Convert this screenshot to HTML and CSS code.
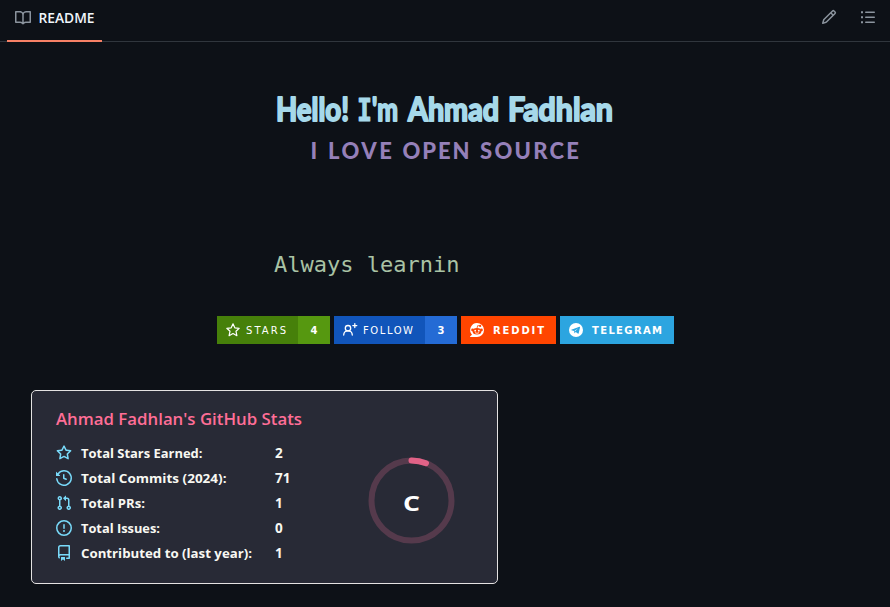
FILE: index.html
```html
<!DOCTYPE html>
<html lang="en">
<head>
<meta charset="utf-8">
<title>README</title>
<link rel="stylesheet" href="styles.css">
</head>
<body>
<header class="bar">
  <div class="tab">
    <svg class="icon" viewBox="0 0 16 16"><path d="M0 1.75A.75.75 0 0 1 .75 1h4.253c1.227 0 2.317.59 3 1.501A3.743 3.743 0 0 1 11.006 1h4.245a.75.75 0 0 1 .75.75v10.5a.75.75 0 0 1-.75.75h-4.507a2.25 2.25 0 0 0-1.591.659l-.622.621a.75.75 0 0 1-1.06 0l-.622-.621A2.25 2.25 0 0 0 5.258 13H.75a.75.75 0 0 1-.75-.75Zm7.251 10.324.004-5.073-.002-2.253A2.25 2.25 0 0 0 5.003 2.5H1.5v9h3.757a3.75 3.75 0 0 1 1.994.574ZM8.755 4.75l-.004 7.322a3.752 3.752 0 0 1 1.992-.572H14.5v-9h-3.495a2.25 2.25 0 0 0-2.25 2.25Z"/></svg>
    <svg class="tab-label" viewBox="0 0 57 20"><text x="0.5" y="15" textLength="56" lengthAdjust="spacingAndGlyphs">README</text></svg>
  </div>
  <div class="actions">
    <svg class="icon" viewBox="0 0 16 16"><path d="M11.013 1.427a1.75 1.75 0 0 1 2.474 0l1.086 1.086a1.75 1.75 0 0 1 0 2.474l-8.61 8.61c-.21.21-.47.364-.756.445l-3.251.93a.75.75 0 0 1-.927-.928l.929-3.25c.081-.286.235-.547.445-.758l8.61-8.61Zm.176 4.823L9.75 4.81l-6.286 6.287a.253.253 0 0 0-.064.108l-.558 1.953 1.953-.558a.253.253 0 0 0 .108-.064Zm1.238-3.763a.25.25 0 0 0-.354 0L10.811 3.75l1.439 1.44 1.263-1.263a.25.25 0 0 0 0-.354Z"/></svg>
    <svg class="icon" viewBox="0 0 16 16"><path d="M5.75 2.5h8.5a.75.75 0 0 1 0 1.5h-8.5a.75.75 0 0 1 0-1.5Zm0 5h8.5a.75.75 0 0 1 0 1.5h-8.5a.75.75 0 0 1 0-1.5Zm0 5h8.5a.75.75 0 0 1 0 1.5h-8.5a.75.75 0 0 1 0-1.5ZM1 2.25h2v2H1Zm0 5h2v2H1Zm0 5h2v2H1Z"/></svg>
  </div>
</header>
<main>
  <svg class="banner" viewBox="0 0 350 90">
    <text class="hello" y="41"><tspan x="7" textLength="73" lengthAdjust="spacingAndGlyphs">Hello!</tspan> <tspan class="slab" x="88" textLength="15" lengthAdjust="spacingAndGlyphs">I</tspan><tspan x="103" textLength="26" lengthAdjust="spacingAndGlyphs">'m</tspan> <tspan x="139" textLength="91" lengthAdjust="spacingAndGlyphs">Ahmad</tspan> <tspan x="239" textLength="105" lengthAdjust="spacingAndGlyphs">Fadhlan</tspan></text>
    <text class="love" y="79"><tspan x="41.5">I</tspan> <tspan x="59" textLength="64">LOVE</tspan> <tspan x="133.5" textLength="67">OPEN</tspan> <tspan x="211" textLength="99">SOURCE</tspan></text>
  </svg>
  <p class="typing">Always learnin</p>
  <div class="badges">
    <div class="badge stars">
      <div class="left">
        <svg viewBox="0 0 16 16"><path d="M8 1.8l1.8 4 4.4.5-3.2 3 .9 4.4L8 11.5l-3.9 2.2.9-4.4-3.2-3 4.4-.5Z" fill="none" stroke="#fff" stroke-width="1.2" stroke-linejoin="round"/></svg>
        <svg class="word" viewBox="0 0 41 28"><text x="0" y="18" textLength="40">STARS</text></svg>
      </div>
      <b>4</b>
    </div>
    <div class="badge follow">
      <div class="left">
        <svg viewBox="0 0 16 16" fill="none" stroke="#fff" stroke-width="1.3" stroke-linecap="round"><circle cx="6" cy="6.2" r="2.7"/><path d="M1.7 13c.2-5.4 8.4-5.4 8.6 0M12.8 1.6v4M10.8 3.6h4"/></svg>
        <svg class="word" viewBox="0 0 51 28"><text x="0" y="18" textLength="50">FOLLOW</text></svg>
      </div>
      <b>3</b>
    </div>
    <div class="badge reddit">
      <svg viewBox="0 0 16 16"><path fill="#fff" d="M8 1a7 7 0 1 1 0 14H1.6c-.5 0-.7-.5-.4-.8L3 12.7A7 7 0 0 1 8 1Z"/><g fill="#ff4500"><ellipse cx="8" cy="9.3" rx="4.4" ry="3.2"/><circle cx="3.5" cy="7.9" r="1.3"/><circle cx="12.5" cy="7.9" r="1.3"/><circle cx="11.2" cy="3.9" r="1.1"/></g><path d="M8 6.3l.7-2.7 2.3.3" fill="none" stroke="#ff4500" stroke-width=".8"/><g fill="#fff"><circle cx="6.2" cy="8.7" r=".9"/><circle cx="9.8" cy="8.7" r=".9"/></g><path d="M6 10.7q2 1.3 4 0" stroke="#fff" fill="none" stroke-width=".8"/></svg>
      <svg class="word" viewBox="0 0 52 28"><text x="0" y="18" textLength="51">REDDIT</text></svg>
    </div>
    <div class="badge telegram">
      <svg viewBox="0 0 16 16"><circle cx="8" cy="8" r="7" fill="#fff"/><path fill="#2ca5e0" d="M3.3 7.8 11.4 4.7q.8-.2.6.8l-1.3 5.8q-.2.8-.9.3L7.7 10.1l-1 1q-.3.2-.3-.2l-.3-2-2.6-.7q-.5-.2-.2-.4Z"/><path d="M6.3 8.9l3.9-2.6-3 3" fill="#fff"/></svg>
      <svg class="word" viewBox="0 0 71 28"><text x="0" y="18" textLength="70">TELEGRAM</text></svg>
    </div>
  </div>
  <section class="card">
    <svg class="card-title" viewBox="0 0 250 28"><text x="0" y="19" textLength="246" lengthAdjust="spacingAndGlyphs">Ahmad Fadhlan's GitHub Stats</text></svg>
    <div class="card-body">
      <div class="stats">
        <div class="row">
          <svg class="icon" viewBox="0 0 16 16"><path fill-rule="evenodd" d="M8 .25a.75.75 0 01.673.418l1.882 3.815 4.21.612a.75.75 0 01.416 1.279l-3.046 2.97.719 4.192a.75.75 0 01-1.088.791L8 12.347l-3.766 1.98a.75.75 0 01-1.088-.79l.72-4.194L.818 6.374a.75.75 0 01.416-1.28l4.21-.611L7.327.668A.75.75 0 018 .25zm0 2.445L6.615 5.5a.75.75 0 01-.564.41l-3.097.45 2.24 2.184a.75.75 0 01.216.664l-.528 3.084 2.769-1.456a.75.75 0 01.698 0l2.77 1.456-.53-3.084a.75.75 0 01.216-.664l2.24-2.183-3.096-.45a.75.75 0 01-.564-.41L8 2.694z"/></svg>
          <svg class="name" viewBox="0 0 194 25"><text x="0" y="17.5" textLength="121.5" lengthAdjust="spacingAndGlyphs">Total Stars Earned:</text></svg><span>2</span>
        </div>
        <div class="row">
          <svg class="icon" viewBox="0 0 16 16"><path fill-rule="evenodd" d="M1.643 3.143L.427 1.927A.25.25 0 000 2.104V5.75c0 .138.112.25.25.25h3.646a.25.25 0 00.177-.427L2.715 4.215a6.5 6.5 0 11-1.18 4.458.75.75 0 10-1.493.154 8.001 8.001 0 101.6-5.684zM7.75 4a.75.75 0 01.75.75v2.992l2.028.812a.75.75 0 01-.557 1.392l-2.5-1A.75.75 0 017 8.25v-3.5A.75.75 0 017.75 4z"/></svg>
          <svg class="name" viewBox="0 0 194 25"><text x="0" y="17.5" textLength="145.5" lengthAdjust="spacingAndGlyphs">Total Commits (2024):</text></svg><span>71</span>
        </div>
        <div class="row">
          <svg class="icon" viewBox="0 0 16 16"><path fill-rule="evenodd" d="M7.177 3.073L9.573.677A.25.25 0 0110 .854v4.792a.25.25 0 01-.427.177L7.177 3.427a.25.25 0 010-.354zM3.75 2.5a.75.75 0 100 1.5.75.75 0 000-1.5zm-2.25.75a2.25 2.25 0 113 2.122v5.256a2.251 2.251 0 11-1.5 0V5.372A2.25 2.25 0 011.5 3.25zM11 2.5h-1V4h1a1 1 0 011 1v5.628a2.251 2.251 0 101.5 0V5A2.5 2.5 0 0011 2.5zm1 10.25a.75.75 0 111.5 0 .75.75 0 01-1.5 0zM3.75 12a.75.75 0 100 1.5.75.75 0 000-1.5z"/></svg>
          <svg class="name" viewBox="0 0 194 25"><text x="0" y="17.5" textLength="64" lengthAdjust="spacingAndGlyphs">Total PRs:</text></svg><span>1</span>
        </div>
        <div class="row">
          <svg class="icon" viewBox="0 0 16 16"><path fill-rule="evenodd" d="M8 1.5a6.5 6.5 0 100 13 6.5 6.5 0 000-13zM0 8a8 8 0 1116 0A8 8 0 010 8zm9 3a1 1 0 11-2 0 1 1 0 012 0zm-.25-6.25a.75.75 0 00-1.5 0v3.5a.75.75 0 001.5 0v-3.5z"/></svg>
          <svg class="name" viewBox="0 0 194 25"><text x="0" y="17.5" textLength="79" lengthAdjust="spacingAndGlyphs">Total Issues:</text></svg><span>0</span>
        </div>
        <div class="row">
          <svg class="icon" viewBox="0 0 16 16"><path fill-rule="evenodd" d="M2 2.5A2.5 2.5 0 014.5 0h8.75a.75.75 0 01.75.75v12.5a.75.75 0 01-.75.75h-2.5a.75.75 0 110-1.5h1.75v-2h-8a1 1 0 00-.714 1.7.75.75 0 01-1.072 1.05A2.495 2.495 0 012 11.5v-9zm10.5-1V9h-8c-.356 0-.694.074-1 .208V2.5a1 1 0 011-1h8zM5 12.25v3.25a.25.25 0 00.4.2l1.45-1.087a.25.25 0 01.3 0L8.6 15.7a.25.25 0 00.4-.2v-3.25a.25.25 0 00-.25-.25h-3.5a.25.25 0 00-.25.25z"/></svg>
          <svg class="name" viewBox="0 0 194 25"><text x="0" y="17.5" textLength="171" lengthAdjust="spacingAndGlyphs">Contributed to (last year):</text></svg><span>1</span>
        </div>
      </div>
      <svg class="ring" viewBox="0 0 88 88"><circle class="rim" cx="44.5" cy="43.5" r="40"/><path class="arc" d="M44.5 3.5A40 40 0 0 1 59 6.2"/><text x="36" y="54" textLength="17" lengthAdjust="spacingAndGlyphs">C</text></svg>
    </div>
  </section>
</main>
</body>
</html>
```
FILE: styles.css
```css
* { box-sizing: border-box; }
body { margin: 0; background: #0d1117; color: #f0f6fc; font-family: "Open Sans", "Noto Sans", sans-serif; overflow: hidden; }
svg { display: block; flex: none; overflow: visible; }
.icon { width: 16px; height: 16px; fill: #8b949e; }
.bar { height: 42px; display: flex; justify-content: space-between; padding: 0 14px 0 7px; border-bottom: 1px solid #30363d; }
.tab { display: flex; gap: 7px; width: 95px; height: 42px; padding: 10px 0 0 8px; border-bottom: 2px solid #f78166; }
.tab-label { width: 57px; height: 20px; margin-top: -2px; fill: #f0f6fc; font-size: 13.5px; font-weight: 600; }
.actions { display: flex; gap: 23px; padding-top: 9px; }
.banner { width: 350px; height: 90px; margin: 38px 0 0 269px; }
.hello { font: 700 33px Lato, sans-serif; fill: #a6d9ea; stroke: #a6d9ea; stroke-width: 2px; stroke-linejoin: round; }
.slab { font-family: "DejaVu Sans Mono", monospace; font-size: 32px; font-weight: 700; stroke-width: 1px; }
.love { font: 900 22px Lato, sans-serif; fill: #9580b9; }
.typing { margin: 81px 0 0 274px; font: 22px/28px "DejaVu Sans Mono", monospace; color: #a9c3a5; }
.badges { display: flex; gap: 4px; margin: 37px 0 0 217px; }
.badge { display: flex; height: 28px; font: 10px "DejaVu Sans", sans-serif; color: #fff; fill: #fff; align-items: center; }
.badge svg { width: 16px; height: 16px; }
.badge .word { height: 28px; }
.badge b { width: 32px; text-align: center; font-size: 10px; line-height: 29px; }
.left { display: flex; align-items: center; height: 28px; padding-left: 8px; gap: 5px; }
.stars { background: #569810; }
.stars .left { width: 81px; background: #46800a; }
.stars .word { width: 41px; }
.follow { background: #246bd5; }
.follow .left { width: 91px; background: #1155ba; }
.follow .word { width: 51px; }
.reddit { width: 95px; background: #ff4500; padding-left: 8px; gap: 8px; font-weight: 700; }
.reddit .word { width: 52px; }
.telegram { width: 114px; background: #2ca5e0; padding-left: 8px; gap: 8px; font-weight: 700; }
.telegram .word { width: 71px; }
.card { width: 467px; height: 194px; margin: 46px 0 0 31px; padding: 15px 0 0 24px; border: 1px solid #e4e2e2; border-radius: 5px; background: #282a36; }
.card-title { width: 250px; height: 28px; fill: #ff6e96; font-size: 17px; font-weight: 600; }
.card-body { display: flex; }
.stats { width: 311px; padding-top: 6px; }
.row { display: flex; height: 25px; align-items: center; color: #f8f8f2; font-size: 13px; font-weight: 700; line-height: 25px; }
.row span { font-size: 13.5px; padding-top: 1px; }
.row .icon { fill: #79dafa; margin-right: 9px; }
.name { width: 194px; height: 25px; fill: #f8f8f2; }
.ring { width: 88px; height: 88px; margin-top: 23px; }
.rim { fill: none; stroke: #553a4c; stroke-width: 6px; }
.arc { fill: none; stroke: #e16287; stroke-width: 6px; stroke-linecap: round; }
.ring text { font-size: 22px; font-weight: 700; fill: #fff; }
```
